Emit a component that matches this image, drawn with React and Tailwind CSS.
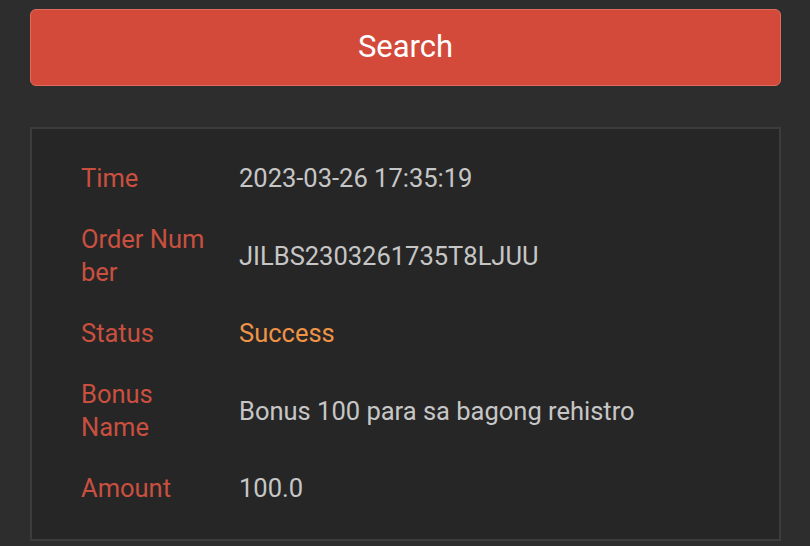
const rows = [
  { label: ['Time'], value: '2023-03-26 17:35:19' },
  { label: ['Order Num', 'ber'], value: 'JILBS2303261735T8LJUU' },
  { label: ['Status'], value: 'Success', tone: 'text-[#ef9446]' },
  { label: ['Bonus', 'Name'], value: 'Bonus 100 para sa bagong rehistro' },
  { label: ['Amount'], value: '100.0' },
];

export default function App() {
  return (
    <div className="min-h-[546px] bg-[#2d2d2d] pl-[30px] pr-[29px] pt-[9px] pb-[6px] font-['Roboto',sans-serif]">
      <button
        type="button"
        className="flex h-[77px] w-full items-center justify-center rounded-[6px] border border-[#e06a5c] bg-[#d34a3a] text-[31px] text-white"
      >
        Search
      </button>

      <div className="mt-[41px] border-2 border-[#3c3c3c] bg-[#262626] pl-[49px] pr-6 pt-[19px] pb-[20px]">
        {rows.map((r) => (
          <div key={r.value} className="flex items-center py-[14px] text-[25.5px] leading-[33px]">
            <div className="w-[158px] shrink-0 text-[#c9503f]">
              {r.label.map((l) => (
                <div key={l}>{l}</div>
              ))}
            </div>
            <div className={r.tone || 'text-[#c6c6c6]'}>{r.value}</div>
          </div>
        ))}
      </div>
    </div>
  );
}
